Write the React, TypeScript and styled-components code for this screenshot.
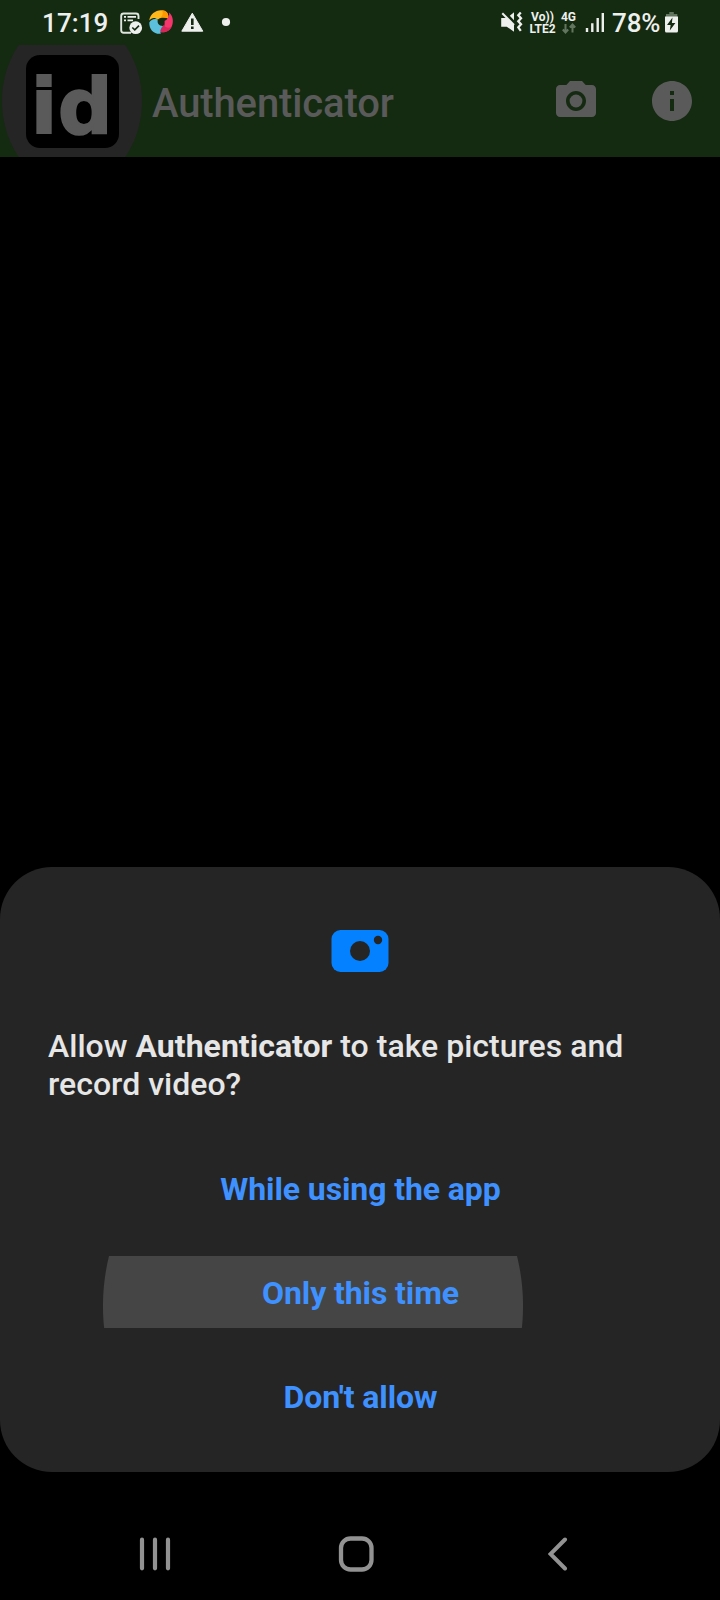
import React from 'react';
import styled, { createGlobalStyle } from 'styled-components';

const GlobalStyle = createGlobalStyle`
  * { box-sizing: border-box; }
  body { margin: 0; background: #000; }
`;

const Screen = styled.div`
  display: flex;
  flex-direction: column;
  width: 720px;
  height: 1600px;
  background: #000;
  font-family: Roboto, sans-serif;
  overflow: hidden;
`;

const Header = styled.header`
  height: 157px;
  background: #152b11;
`;

const StatusBar = styled.div`
  display: flex;
  justify-content: space-between;
  height: 45px;
  padding: 0 41px 0 42px;
  color: #eef0ee;
`;

const StatusGroup = styled.div`
  display: flex;
  align-items: flex-start;
  svg { display: block; flex: none; }
`;

const StatusText = styled.span<{ $width: number; $spacing?: number }>`
  width: ${p => p.$width}px;
  padding-top: 8px;
  font-size: 26px;
  line-height: 30px;
  font-weight: 500;
  letter-spacing: ${p => p.$spacing ?? 0}px;
  white-space: nowrap;
`;

const NetworkLabel = styled.span<{ $width: number }>`
  display: flex;
  flex-direction: column;
  align-items: center;
  width: ${p => p.$width}px;
  padding-top: 11px;
  font-size: 12px;
  line-height: 12px;
  font-weight: 700;
  white-space: nowrap;
`;

const AppBar = styled.div`
  display: flex;
  height: 112px;
`;

const LogoButton = styled.div`
  display: flex;
  position: relative;
  width: 143px;
  padding: 10px 0 0 26px;
  overflow: hidden;
  &::before {
    content: '';
    position: absolute;
    left: 2px;
    top: -30px;
    width: 140px;
    height: 172px;
    border-radius: 50%;
    background: #252525;
  }
`;

const Logo = styled.div`
  position: relative;
  width: 93px;
  height: 93px;
  padding-left: 5px;
  border-radius: 14px;
  background: #000;
  color: #5a5a5a;
  font: 700 76px/104px 'DejaVu Sans', sans-serif;
  letter-spacing: 1px;
  -webkit-text-stroke: 2px #5a5a5a;
`;

const Title = styled.h1`
  margin: 0;
  padding: 35px 0 0 9px;
  width: 409px;
  color: #5a5a5a;
  font-size: 40px;
  line-height: 47px;
  font-weight: 500;
  letter-spacing: -0.12px;
`;

const Actions = styled.div`
  display: flex;
  gap: 48px;
  padding-top: 32px;
  svg { display: block; }
`;

const Preview = styled.main`
  height: 710px;
`;

const Dialog = styled.section`
  display: flex;
  flex-direction: column;
  align-items: center;
  height: 605px;
  padding-top: 63px;
  border-radius: 52px;
  background: #252525;
  svg { display: block; }
`;

const Message = styled.p`
  width: 100%;
  margin: 55px 0 0;
  padding: 0 48px;
  color: #e6e6e6;
  font-size: 32px;
  line-height: 38px;
  font-weight: 500;
  letter-spacing: 0.02px;
  white-space: nowrap;
  b { font-weight: 700; }
`;

const Choices = styled.div`
  display: flex;
  flex-direction: column;
  gap: 32px;
  width: 624px;
  margin-top: 49px;
`;

const Choice = styled.button<{ $pressed?: boolean }>`
  height: 72px;
  padding: 2px 0 0 1px;
  border: 0;
  background: ${p => (p.$pressed ? 'radial-gradient(circle at 265px 50px, #454545 209.5px, transparent 210.5px)' : 'none')};
  color: #3e91ff;
  font: 700 32px/70px Roboto, sans-serif;
  letter-spacing: -0.1px;
`;

const NavBar = styled.nav`
  display: flex;
  align-items: center;
  height: 92px;
  margin-top: 36px;
  padding-left: 139px;
  svg { display: block; }
`;

const HomeGap = styled.div`
  display: flex;
  margin: 0 173px 0 167px;
`;

export default function App() {
  return (
    <Screen>
      <GlobalStyle />
      <Header>
        <StatusBar>
          <StatusGroup>
            <StatusText $width={78} $spacing={0.1}>17:19</StatusText>
            <svg width="112" height="45" viewBox="120 0 112 45">
              <path d="M138.500 19V16a2.500 2.500 0 0 0-2.500-2.500H123.700A2.500 2.500 0 0 0 121.200 16V30.300a2.500 2.500 0 0 0 2.500 2.500H131" fill="none" stroke="#dfe5de" strokeWidth="1.900" />
              <path d="M124 16.800h2M127.500 16.800H136M124 20.300h2M127.500 20.300H133" stroke="#eef0ee" strokeWidth="1.800" />
              <circle cx="135.700" cy="27.700" r="6.400" fill="#eef0ee" />
              <path d="M132.300 27.500l2.500 2.400 4.200-4.300" fill="none" stroke="#152b11" strokeWidth="1.600" />
              <path d="M149.300 20.500C150 14 156 9.800 161.500 10.200C166 10.300 169 13 168.300 18.500C164 17 161 17 158 19.500C154 16.800 151.500 17.800 149.300 20.500Z" fill="#ffb81c" />
              <path d="M161.500 10.200C166 10.300 169 13 168.300 18.500C166 17.300 163 17.200 160.500 17.800C163 15 163.500 12 161.500 10.200Z" fill="#ff9800" />
              <path d="M169.200 12.500C173 16 174 22 171.600 26.800C169.500 31.500 164 33.200 160 32C163.500 29 165 26.500 164.600 21C168 19.500 169.500 16 169.200 12.500Z" fill="#f5366d" />
              <path d="M171.600 26.800C169.500 31.500 164 33.200 160 32C160.500 29 161.500 27 163.800 25C165.500 28 169 28.500 171.600 26.800Z" fill="#d9265a" />
              <path d="M149.300 22.500C151 19.500 154 18.300 157.800 19.500C157 23 158.500 25.800 163 26C160.500 28.500 159.800 31.500 160.800 33.800C154 34.500 149 29.500 149.300 22.500Z" fill="#5cc0dd" />
              <path d="M192.300 13.200L202.800 31.200H181.800Z" fill="#eef0ee" stroke="#eef0ee" strokeWidth="1" strokeLinejoin="round" />
              <path d="M192.300 18.500v6.500M192.300 26.500v2.600" stroke="#152b11" strokeWidth="2.600" />
              <circle cx="226" cy="22" r="4.100" fill="#eef0ee" />
            </svg>
          </StatusGroup>
          <StatusGroup>
            <svg width="27" height="45" viewBox="501 0 27 45">
              <path d="M501.200 18H507L514 25V31.700L506.800 26.800H501.200Z" fill="#eef0ee" />
              <path d="M502.300 13.300L514 25" stroke="#eef0ee" strokeWidth="2" />
              <path d="M509.800 15.800L514 12.300V20.200Z" fill="#eef0ee" />
              <path d="M520.800 12.500l-2.500 2.800 2.700 3-2.700 3 2.700 3-2.700 3 2.500 3.500" fill="none" stroke="#eef0ee" strokeWidth="2.300" />
            </svg>
            <NetworkLabel $width={29}><span>Vo))</span><span>LTE2</span></NetworkLabel>
            <NetworkLabel $width={23}>
              <span>4G</span>
              <svg width="16" height="12" viewBox="0 0 16 12"><path d="M4.500 1V8.800M1.800 6.500l2.700 3 2.700-3M11.500 9.500V2M8.800 4.500l2.700-3 2.700 3" fill="none" stroke="#62765f" strokeWidth="2" /></svg>
            </NetworkLabel>
            <svg width="32" height="45" viewBox="580 0 32 45">
              <path d="M587 28v4M592.300 23.300V32M597.700 18V32M602.800 13V32" stroke="#eef0ee" strokeWidth="2.400" />
            </svg>
            <StatusText $width={53} $spacing={-0.1}>78%</StatusText>
            <svg width="14" height="45" viewBox="665 0 14 45">
              <path d="M669.300 12h4.500v2h3.500v3H666v-3h3.300Z" fill="#62765f" />
              <path d="M665 16.500h13V31a1.500 1.500 0 0 1-1.500 1.500h-10A1.500 1.500 0 0 1 665 31Z" fill="#eef0ee" />
              <path d="M672.500 17.500l-5.500 7.600h3.600l-.8 5.500 5.600-7.600h-3.500Z" fill="#152b11" />
            </svg>
          </StatusGroup>
        </StatusBar>
        <AppBar>
          <LogoButton><Logo>id</Logo></LogoButton>
          <Title>Authenticator</Title>
          <Actions>
            <svg width="48" height="48" viewBox="0 0 24 24" fill="#5a5a5a">
              <circle cx="12" cy="12" r="3.200" />
              <path d="M9 2L7.170 4H4c-1.100 0-2 .9-2 2v12c0 1.100.9 2 2 2h16c1.100 0 2-.9 2-2V6c0-1.100-.9-2-2-2h-3.170L15 2H9zm3 15c-2.760 0-5-2.240-5-5s2.240-5 5-5 5 2.240 5 5-2.240 5-5 5z" />
            </svg>
            <svg width="48" height="48" viewBox="0 0 24 24" fill="#5a5a5a">
              <path d="M12 2C6.480 2 2 6.480 2 12s4.480 10 10 10 10-4.480 10-10S17.520 2 12 2zm1 15h-2v-6h2v6zm0-8h-2V7h2v2z" />
            </svg>
          </Actions>
        </AppBar>
      </Header>
      <Preview />
      <Dialog>
        <svg width="58" height="42" viewBox="0 0 58 42">
          <rect x=".5" width="57" height="42" rx="9" fill="#0381fe" />
          <circle cx="29" cy="21" r="10" fill="#252525" />
          <circle cx="47" cy="10" r="4.200" fill="#252525" />
        </svg>
        <Message>Allow <b>Authenticator</b> to take pictures and<br />record video?</Message>
        <Choices>
          <Choice>While using the app</Choice>
          <Choice $pressed>Only this time</Choice>
          <Choice>Don't allow</Choice>
        </Choices>
      </Dialog>
      <NavBar>
        <svg width="32" height="36" viewBox="139 1536 32 36">
          <path d="M142 1539.700v28.600M155 1539.700v28.600M168 1539.700v28.600" stroke="#929292" strokeWidth="4.200" strokeLinecap="round" />
        </svg>
        <HomeGap>
          <svg width="37" height="36" viewBox="338 1536 37 36">
            <rect x="341" y="1538.500" width="30.500" height="31" rx="9.500" fill="none" stroke="#929292" strokeWidth="4.300" />
          </svg>
        </HomeGap>
        <svg width="20" height="36" viewBox="548 1536 20 36">
          <path d="M565 1539.500L550.500 1554L565 1568.500" fill="none" stroke="#929292" strokeWidth="4" strokeLinecap="round" />
        </svg>
      </NavBar>
    </Screen>
  );
}
